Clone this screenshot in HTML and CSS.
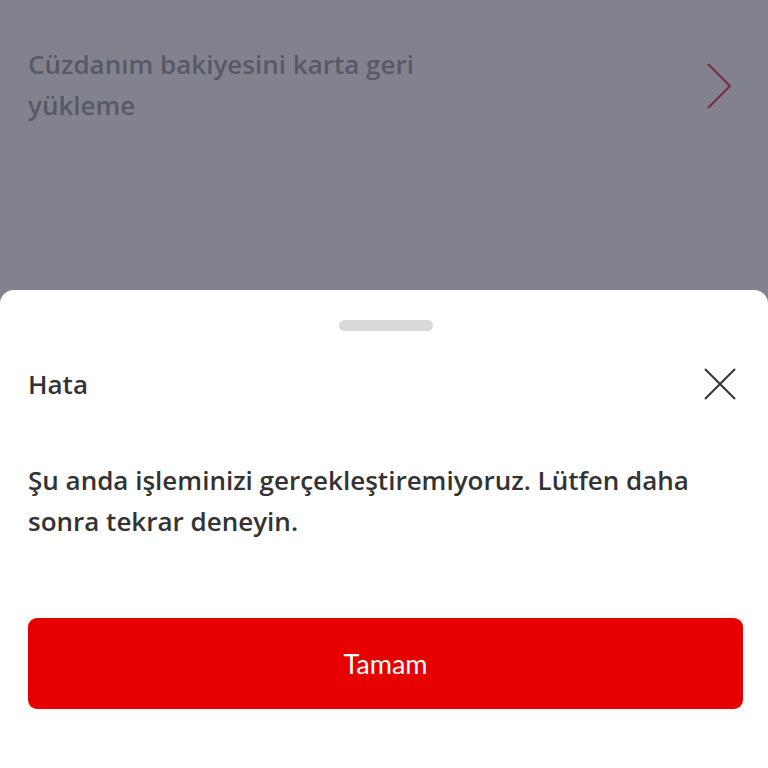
FILE: index.html
```html
<!DOCTYPE html>
<html lang="tr">
<head>
    <meta charset="UTF-8">
    <meta name="viewport" content="width=device-width, initial-scale=1.0">
    <title>Hata</title>
    <link rel="stylesheet" href="styles.css">
</head>
<body>
    <div class="page">
        <div class="list-item">
            <div class="list-text">Cüzdanım bakiyesini karta geri yükleme</div>
            <svg class="chevron" width="28" height="48" viewBox="0 0 28 48">
                <path d="M3 2 L25 24 L3 46" fill="none" stroke="#7b2a3f" stroke-width="2"/>
            </svg>
        </div>

        <div class="sheet">
            <div class="handle"></div>
            <div class="sheet-header">
                <div class="sheet-title">Hata</div>
                <svg class="close" width="32" height="32" viewBox="0 0 32 32">
                    <path d="M1 1 L31 31 M31 1 L1 31" fill="none" stroke="#333" stroke-width="2"/>
                </svg>
            </div>
            <p class="message">Şu anda işleminizi gerçekleştiremiyoruz. Lütfen daha sonra tekrar deneyin.</p>
            <button class="ok-btn">Tamam</button>
        </div>
    </div>
</body>
</html>
```

FILE: styles.css
```css
body {
    margin: 0;
    font-family: "Open Sans", Lato, sans-serif;
    background-color: #82828e;
}

.page {
    height: 768px;
    display: flex;
    flex-direction: column;
    overflow: hidden;
}

.list-item {
    height: 290px;
    box-sizing: border-box;
    padding: 44px 36px 0 28px;
    display: flex;
    justify-content: space-between;
    align-items: flex-start;
}

.list-text {
    width: 440px;
    font-size: 26px;
    font-weight: 600;
    line-height: 41px;
    color: #585966;
}

.chevron {
    margin-top: 18px;
    margin-right: -1px;
}

.sheet {
    flex-grow: 1;
    background-color: #ffffff;
    border-radius: 14px 14px 0 0;
    padding: 30px 25px 0 28px;
}

.handle {
    width: 94px;
    height: 11px;
    margin: 0 auto;
    background-color: #d9d9d9;
    border-radius: 6px;
}

.sheet-header {
    display: flex;
    justify-content: space-between;
    align-items: center;
    margin-top: 35px;
    padding-right: 7px;
}

.sheet-title {
    font-size: 26px;
    font-weight: 600;
    color: #333333;
}

.message {
    margin: 58px 0 0;
    width: 700px;
    font-size: 26px;
    font-weight: 600;
    line-height: 41px;
    color: #333333;
}

.ok-btn {
    display: block;
    width: 715px;
    height: 91px;
    margin-top: 76px;
    border: none;
    border-radius: 9px;
    background-color: #e60000;
    color: #ffffff;
    font-family: Lato, "Open Sans", sans-serif;
    font-size: 27px;
}
```
